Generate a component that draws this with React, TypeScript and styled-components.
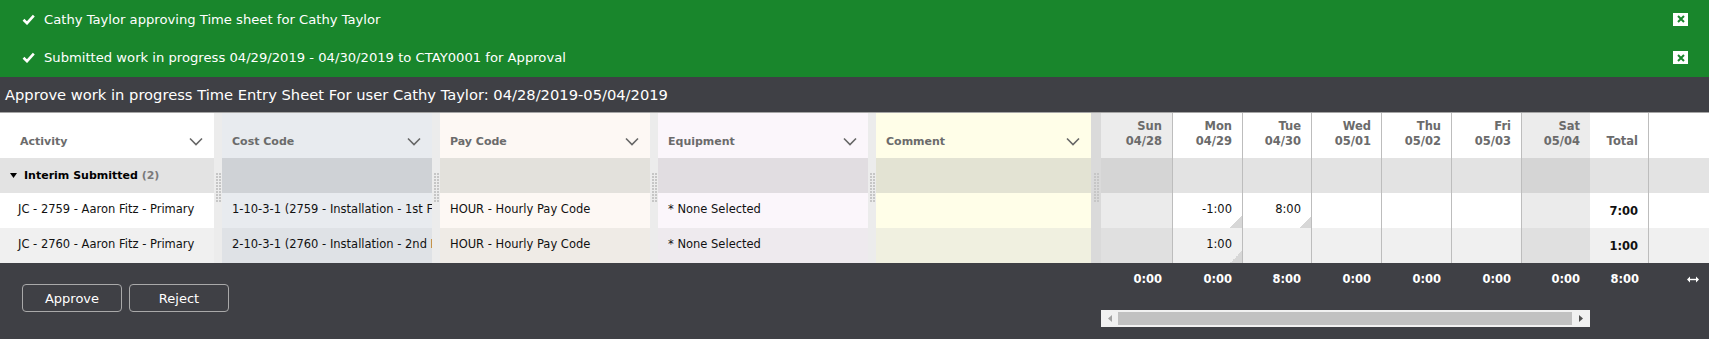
import React from 'react';
import styled, { createGlobalStyle } from 'styled-components';

const COLS =
  '214px 8px 210px 8px 210px 8px 210px 8px 215px 10px 71px 70px 69px 70px 70px 70px 69px 59px 1fr';

const GlobalStyle = createGlobalStyle`
  html, body { margin: 0; padding: 0; background: #ffffff; }
  body {
    width: 1709px;
    overflow: hidden;
    font-family: "DejaVu Sans", Verdana, Tahoma, sans-serif;
  }
  * { box-sizing: border-box; }
`;

type Tone = 'header' | 'group' | 'odd' | 'even';
type Kind =
  | 'activity'
  | 'cost'
  | 'pay'
  | 'equip'
  | 'comment'
  | 'weekend'
  | 'day'
  | 'total'
  | 'filler';

const palette: Record<Tone, Record<Kind, string>> = {
  header: {
    activity: '#ffffff',
    cost: '#e8ebef',
    pay: '#fdf8f4',
    equip: '#fbf6fb',
    comment: '#fffee8',
    weekend: '#ececec',
    day: '#ffffff',
    total: '#ffffff',
    filler: '#ffffff',
  },
  group: {
    activity: '#e3e3e3',
    cost: '#cfd2d6',
    pay: '#e3e1dc',
    equip: '#e1dde1',
    comment: '#e3e3d3',
    weekend: '#d5d5d5',
    day: '#e3e3e3',
    total: '#e3e3e3',
    filler: '#e3e3e3',
  },
  odd: {
    activity: '#ffffff',
    cost: '#e8ebef',
    pay: '#fdf8f4',
    equip: '#fbf6fb',
    comment: '#fffee8',
    weekend: '#ebebeb',
    day: '#ffffff',
    total: '#ffffff',
    filler: '#ffffff',
  },
  even: {
    activity: '#f0f0f0',
    cost: '#dfe2e6',
    pay: '#efebe6',
    equip: '#eeeaee',
    comment: '#f0f0e0',
    weekend: '#e0e0e0',
    day: '#f0f0f0',
    total: '#f0f0f0',
    filler: '#f0f0f0',
  },
};

/* ---------- Notification banner ---------- */

const Banner = styled.div`
  background: #19862c;
  height: 77px;
  display: flex;
  flex-direction: column;
`;

const Notice = styled.div`
  flex: 1;
  display: flex;
  align-items: center;
  padding: 0 21px 0 22px;
  color: #ffffff;
  font-size: 13.15px;
`;

const NoticeText = styled.span`
  margin-left: 9px;
  white-space: nowrap;
`;

const CloseBox = styled.button`
  margin-left: auto;
  width: 15px;
  height: 13px;
  padding: 0;
  border: 0;
  background: #ffffff;
  display: flex;
  align-items: center;
  justify-content: center;
`;

const CheckIcon = () => (
  <svg width="13" height="11" viewBox="0 0 13 11">
    <path d="M1.5 5.8 L5 9.2 L11.8 1.6" fill="none" stroke="#ffffff" strokeWidth="2.6" />
  </svg>
);

const CloseIcon = () => (
  <svg width="8" height="8" viewBox="0 0 8 8">
    <path d="M1 1 L7 7 M7 1 L1 7" stroke="#19862c" strokeWidth="2" />
  </svg>
);

/* ---------- Title bar ---------- */

const TitleBar = styled.div`
  height: 36px;
  background: #3f4045;
  border-bottom: 1px solid #a5a5a5;
  color: #ffffff;
  font-size: 14.7px;
  display: flex;
  align-items: center;
  padding-left: 5px;
  white-space: nowrap;
`;

/* ---------- Grid ---------- */

const Table = styled.div`
  display: grid;
  grid-template-columns: ${COLS};
  grid-template-rows: 45px 35px 35px 35px;
`;

const Grip = styled.div<{ $col: number; $dark?: boolean }>`
  grid-column: ${(p) => p.$col};
  grid-row: 1 / -1;
  background: ${(p) => (p.$dark ? '#dadada' : '#ececec')};
  display: flex;
  justify-content: center;
  padding-top: 60px;
`;

const GripDots = styled.div`
  width: 5px;
  height: 30px;
  background: conic-gradient(from 270deg at 2px 2px, #c6c6c6 90deg, transparent 0) 0 0 / 3px 3px;
`;

const Cell = styled.div<{
  $bg: string;
  $right?: boolean;
  $line?: boolean;
  $rline?: boolean;
  $bold?: boolean;
  $corner?: boolean;
  $pl?: number;
}>`
  background-color: ${(p) => p.$bg};
  background-image: ${(p) =>
    p.$corner ? 'linear-gradient(to top left, #d7d7d7 50%, transparent 50%)' : 'none'};
  background-repeat: no-repeat;
  background-position: right bottom;
  background-size: 12px 12px;
  border-left: ${(p) => (p.$line ? '1px solid #bdbdbd' : '0')};
  border-right: ${(p) => (p.$rline ? '1px solid #bdbdbd' : '0')};
  display: flex;
  align-items: center;
  justify-content: ${(p) => (p.$right ? 'flex-end' : 'flex-start')};
  padding: 0 ${(p) => (p.$right ? '10px' : '0')} ${(p) => (p.$bold ? '0' : '3px')}
    ${(p) => p.$pl ?? 0}px;
  font-size: 11.5px;
  font-weight: ${(p) => (p.$bold ? 700 : 400)};
  color: #111111;
  white-space: nowrap;
  overflow: hidden;
`;

const HeadCell = styled.div<{ $bg: string; $pl: number }>`
  background: ${(p) => p.$bg};
  display: flex;
  align-items: flex-end;
  justify-content: space-between;
  padding: 0 11px 10px ${(p) => p.$pl}px;
  font-size: 11px;
  font-weight: 700;
  color: #6b6b6b;
  line-height: 13px;
`;

const DayHead = styled.div<{ $bg: string; $line?: boolean; $rline?: boolean }>`
  background: ${(p) => p.$bg};
  border-left: ${(p) => (p.$line ? '1px solid #bdbdbd' : '0')};
  border-right: ${(p) => (p.$rline ? '1px solid #bdbdbd' : '0')};
  display: flex;
  flex-direction: column;
  align-items: flex-end;
  justify-content: flex-end;
  padding: 0 10px 9px 0;
  font-size: 11.5px;
  font-weight: 700;
  color: #6b6b6b;
  line-height: 15px;
  text-align: right;
`;

const GroupLabel = styled.div<{ $bg: string }>`
  background: ${(p) => p.$bg};
  display: flex;
  align-items: center;
  gap: 7px;
  padding-left: 10px;
  font-size: 11px;
  font-weight: 700;
  color: #000000;
  white-space: nowrap;
`;

const GroupCount = styled.span`
  color: #7a7a7a;
`;

const Chevron = () => (
  <svg width="14" height="13" viewBox="0 0 14 13">
    <path d="M1 3.5 L7 9.5 L13 3.5" fill="none" stroke="#666666" strokeWidth="1.6" />
  </svg>
);

const Caret = () => (
  <svg width="7" height="5" viewBox="0 0 7 5">
    <path d="M0 0 L7 0 L3.5 5 Z" fill="#000000" />
  </svg>
);

/* ---------- Footer ---------- */

const Footer = styled.div`
  height: 76px;
  background: #3f4045;
  display: grid;
  grid-template-columns: ${COLS};
  grid-template-rows: 32px 1fr;
`;

const Actions = styled.div`
  grid-column: 1 / 11;
  grid-row: 1 / 3;
  display: flex;
  align-items: flex-start;
  gap: 7px;
  padding: 21px 0 0 22px;
`;

const ActionButton = styled.button`
  width: 100px;
  height: 28px;
  border: 1px solid #a9a9a9;
  border-radius: 4px;
  background: transparent;
  color: #ffffff;
  font-family: inherit;
  font-size: 13px;
  padding: 0;
`;

const TotalCell = styled.div`
  grid-row: 1;
  display: flex;
  align-items: center;
  justify-content: flex-end;
  padding-right: 10px;
  color: #ffffff;
  font-size: 11.5px;
  font-weight: 700;
`;

const ResizeCell = styled.div`
  grid-row: 1;
  grid-column: 19;
  display: flex;
  align-items: center;
  justify-content: flex-end;
  padding-right: 10px;
`;

const Scrollbar = styled.div`
  grid-column: 11 / 18;
  grid-row: 2;
  margin-top: 15px;
  height: 17px;
  background: #f1f1f1;
  display: flex;
  align-items: center;
`;

const ScrollArrow = styled.div<{ $w: number }>`
  width: ${(p) => p.$w}px;
  height: 17px;
  display: flex;
  align-items: center;
  justify-content: center;
`;

const ScrollThumb = styled.div`
  flex: 1;
  height: 13px;
  background: #c1c1c1;
`;

const ResizeIcon = () => (
  <svg width="12" height="7" viewBox="0 0 12 7">
    <path d="M2 3.5 H10" stroke="#ffffff" strokeWidth="1.4" />
    <path d="M0 3.5 L3 0.5 L3 6.5 Z M12 3.5 L9 0.5 L9 6.5 Z" fill="#ffffff" />
  </svg>
);

/* ---------- Data ---------- */

const dayHeads = [
  { d: 'Sun', n: '04/28', kind: 'weekend' as Kind },
  { d: 'Mon', n: '04/29', kind: 'day' as Kind },
  { d: 'Tue', n: '04/30', kind: 'day' as Kind },
  { d: 'Wed', n: '05/01', kind: 'day' as Kind },
  { d: 'Thu', n: '05/02', kind: 'day' as Kind },
  { d: 'Fri', n: '05/03', kind: 'day' as Kind },
  { d: 'Sat', n: '05/04', kind: 'weekend' as Kind },
];

const textCols: { label: string; kind: Kind; pl: number }[] = [
  { label: 'Activity', kind: 'activity', pl: 20 },
  { label: 'Cost Code', kind: 'cost', pl: 10 },
  { label: 'Pay Code', kind: 'pay', pl: 10 },
  { label: 'Equipment', kind: 'equip', pl: 10 },
  { label: 'Comment', kind: 'comment', pl: 10 },
];

type Row = {
  tone: Tone;
  activity: string;
  cost: string;
  pay: string;
  equip: string;
  hours: string[];
  corners: boolean[];
  total: string;
};

const rows: Row[] = [
  {
    tone: 'odd',
    activity: 'JC - 2759 - Aaron Fitz - Primary',
    cost: '1-10-3-1 (2759 - Installation - 1st Floor)',
    pay: 'HOUR - Hourly Pay Code',
    equip: '* None Selected',
    hours: ['', '-1:00', '8:00', '', '', '', ''],
    corners: [false, true, true, false, false, false, false],
    total: '7:00',
  },
  {
    tone: 'even',
    activity: 'JC - 2760 - Aaron Fitz - Primary',
    cost: '2-10-3-1 (2760 - Installation - 2nd Floor)',
    pay: 'HOUR - Hourly Pay Code',
    equip: '* None Selected',
    hours: ['', '1:00', '', '', '', '', ''],
    corners: [false, true, false, false, false, false, false],
    total: '1:00',
  },
];

const footerTotals = ['0:00', '0:00', '8:00', '0:00', '0:00', '0:00', '0:00', '8:00'];

export default function App() {
  const g = palette.group;
  return (
    <>
      <GlobalStyle />
      <Banner>
        <Notice>
          <CheckIcon />
          <NoticeText>Cathy Taylor approving Time sheet for Cathy Taylor</NoticeText>
          <CloseBox aria-label="close">
            <CloseIcon />
          </CloseBox>
        </Notice>
        <Notice>
          <CheckIcon />
          <NoticeText>
            Submitted work in progress 04/29/2019 - 04/30/2019 to CTAY0001 for Approval
          </NoticeText>
          <CloseBox aria-label="close">
            <CloseIcon />
          </CloseBox>
        </Notice>
      </Banner>

      <TitleBar>
        Approve work in progress Time Entry Sheet For user Cathy Taylor: 04/28/2019-05/04/2019
      </TitleBar>

      <Table>
        {[2, 4, 6, 8].map((c) => (
          <Grip key={c} $col={c}>
            <GripDots />
          </Grip>
        ))}
        <Grip $col={10} $dark>
          <GripDots />
        </Grip>

        {/* header */}
        {textCols.map((c) => (
          <HeadCell key={c.label} $bg={palette.header[c.kind]} $pl={c.pl}>
            <span>{c.label}</span>
            <Chevron />
          </HeadCell>
        ))}
        {dayHeads.map((d, i) => (
          <DayHead key={d.d} $bg={palette.header[d.kind]} $line={i > 0}>
            <span>{d.d}</span>
            <span>{d.n}</span>
          </DayHead>
        ))}
        <DayHead $bg={palette.header.total} $rline>
          <span>Total</span>
        </DayHead>
        <DayHead $bg={palette.header.filler} />

        {/* group */}
        <GroupLabel $bg={g.activity}>
          <Caret />
          <span>
            Interim Submitted <GroupCount>(2)</GroupCount>
          </span>
        </GroupLabel>
        <Cell $bg={g.cost} />
        <Cell $bg={g.pay} />
        <Cell $bg={g.equip} />
        <Cell $bg={g.comment} />
        {dayHeads.map((d, i) => (
          <Cell key={d.d} $bg={g[d.kind]} $line={i > 0} />
        ))}
        <Cell $bg={g.total} $rline />
        <Cell $bg={g.filler} />

        {/* rows */}
        {rows.map((r) => {
          const p = palette[r.tone];
          return (
            <React.Fragment key={r.activity}>
              <Cell $bg={p.activity} $pl={18}>
                {r.activity}
              </Cell>
              <Cell $bg={p.cost} $pl={10}>
                {r.cost}
              </Cell>
              <Cell $bg={p.pay} $pl={10}>
                {r.pay}
              </Cell>
              <Cell $bg={p.equip} $pl={10}>
                {r.equip}
              </Cell>
              <Cell $bg={p.comment} />
              {dayHeads.map((d, i) => (
                <Cell
                  key={d.d}
                  $bg={p[d.kind]}
                  $line={i > 0}
                  $right
                  $corner={r.corners[i]}
                >
                  {r.hours[i]}
                </Cell>
              ))}
              <Cell $bg={p.total} $rline $right $bold>
                {r.total}
              </Cell>
              <Cell $bg={p.filler} />
            </React.Fragment>
          );
        })}
      </Table>

      <Footer>
        <Actions>
          <ActionButton>Approve</ActionButton>
          <ActionButton>Reject</ActionButton>
        </Actions>
        {footerTotals.map((t, i) => (
          <TotalCell key={i} style={{ gridColumn: 11 + i }}>
            {t}
          </TotalCell>
        ))}
        <ResizeCell>
          <ResizeIcon />
        </ResizeCell>
        <Scrollbar>
          <ScrollArrow $w={17}>
            <svg width="4" height="7" viewBox="0 0 4 7">
              <path d="M4 0 L0 3.5 L4 7 Z" fill="#a3a3a3" />
            </svg>
          </ScrollArrow>
          <ScrollThumb />
          <ScrollArrow $w={18}>
            <svg width="4" height="7" viewBox="0 0 4 7">
              <path d="M0 0 L4 3.5 L0 7 Z" fill="#505050" />
            </svg>
          </ScrollArrow>
        </Scrollbar>
      </Footer>
    </>
  );
}
